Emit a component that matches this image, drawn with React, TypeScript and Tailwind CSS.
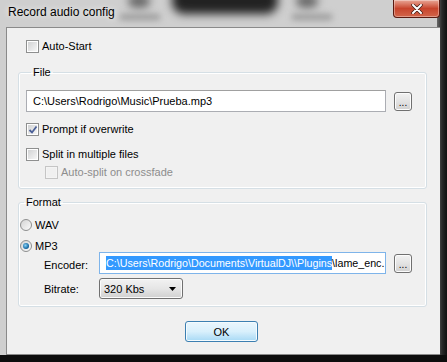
import React from "react"

function CheckBox({ checked = false, disabled = false }: { checked?: boolean; disabled?: boolean }) {
  return (
    <span
      className={`relative flex h-[13px] w-[13px] shrink-0 items-center justify-center border ${
        disabled ? "border-[#c5c5c5] bg-[#f4f4f4]" : "border-[#8e8f8f] bg-white"
      }`}
    >
      <span
        className={`h-[9px] w-[9px] ${
          disabled ? "bg-[#f0f0f0]" : "bg-gradient-to-br from-[#d2d3d4] to-[#f6f6f6]"
        }`}
      />
      {checked && (
        <svg className="absolute left-[1px] top-[1px]" width="10" height="10" viewBox="0 0 10 10">
          <path d="M1.5 5 L4 7.5 L8.5 1.5" fill="none" stroke="#4a5f97" strokeWidth="1.8" />
        </svg>
      )}
    </span>
  )
}

function Radio({ checked = false }: { checked?: boolean }) {
  return (
    <span className="flex h-[12px] w-[12px] shrink-0 items-center justify-center rounded-full border border-[#8e8f8f] bg-gradient-to-br from-[#d4d4d4] to-[#fbfbfb]">
      {checked && (
        <span className="h-[6px] w-[6px] rounded-full bg-[radial-gradient(circle_at_40%_40%,#8ad2f5,#1a6ea8_60%,#0d3a63)]" />
      )}
    </span>
  )
}

function DotsButton() {
  return (
    <div className="flex h-[19px] w-[18px] shrink-0 items-end justify-center rounded-[3px] border border-[#707070] bg-gradient-to-b from-[#f2f2f2] via-[#e3e3e3] to-[#d0d0d0] pb-[2px] text-[10px] leading-[10px] text-black shadow-[inset_0_0_0_1px_#fcfcfc]">
      ...
    </div>
  )
}

function CheckRow({ label, checked, disabled }: { label: string; checked?: boolean; disabled?: boolean }) {
  return (
    <div className="flex h-[13px] items-center gap-[3px]">
      <CheckBox checked={checked} disabled={disabled} />
      <span className={`leading-[13px] ${disabled ? "text-[#8d8d8d]" : "text-black"}`}>{label}</span>
    </div>
  )
}

export default function App() {
  return (
    <div
      className="relative h-[362px] w-[447px] overflow-hidden bg-[#cfcfcf] text-[11px] text-black"
      style={{ fontFamily: '"Liberation Sans", Arial, sans-serif' }}
    >
      {/* glass background blur */}
      <div className="absolute left-[172px] top-[-14px] h-[28px] w-[106px] rounded-[12px] bg-[#222222] blur-[5px]" />
      <div className="absolute left-[128px] top-[-6px] h-[14px] w-[22px] rounded-full bg-[#6a6a6a] blur-[4px]" />
      <div className="absolute left-[296px] top-[-6px] h-[14px] w-[22px] rounded-full bg-[#6a6a6a] blur-[4px]" />
      <div className="absolute left-[120px] top-[14px] h-[6px] w-[40px] bg-[#9a9a9a] blur-[3px]" />
      <div className="absolute left-[292px] top-[14px] h-[6px] w-[40px] bg-[#9a9a9a] blur-[3px]" />
      <div className="absolute right-0 top-0 h-[362px] w-[10px] bg-gradient-to-r from-[#6a6a6a] via-[#2a2a2a] to-[#101010]" />

      <div className="relative flex h-[362px] flex-col">
        {/* title bar */}
        <div className="flex h-[27px] items-start">
          <span className="ml-[8px] mt-[5px] text-[12px] leading-[14px] text-black [text-shadow:0_0_6px_#ffffff]">
            Record audio config
          </span>
          <div className="ml-auto mr-[7px] flex h-[18px] w-[47px] items-center justify-center rounded-b-[4px] border border-t-0 border-[#5a1a10] bg-gradient-to-b from-[#e8a696] via-[#c7442c] to-[#d2654a] shadow-[inset_0_0_0_1px_rgba(255,255,255,0.35)]">
            <svg width="12" height="10" viewBox="0 0 12 10">
              <path d="M2 1 L10 9 M10 1 L2 9" stroke="#3a1a14" strokeWidth="3.4" strokeLinecap="round" />
              <path d="M2 1 L10 9 M10 1 L2 9" stroke="#ffffff" strokeWidth="2" strokeLinecap="round" />
            </svg>
          </div>
        </div>

        <div className="flex">
          <div className="w-[7px] border-r border-[#8a8a8a]" />
          {/* client area */}
          <div className="flex h-[328px] w-[433px] flex-col border-y border-[#8a8a8a] bg-[#f0f0f0]">
            <div className="ml-[19px] mt-[12px]">
              <CheckRow label="Auto-Start" />
            </div>

            <fieldset className="ml-[11px] mt-[12px] w-[409px] rounded-[3px] border border-[#d5dfe5] pb-[9px] pl-[7px] pr-[13px] shadow-[inset_0_0_0_1px_#ffffff]">
              <legend className="ml-[5px] px-[2px] leading-[14px]">File</legend>
              <div className="mt-[11px] flex items-center gap-[8px]">
                <div className="flex h-[22px] w-[360px] items-center border border-[#abadb3] border-t-[#a0a0a0] bg-white pl-[6px] leading-[14px]">
                  C:\Users\Rodrigo\Music\Prueba.mp3
                </div>
                <DotsButton />
              </div>
              <div className="mt-[11px]">
                <CheckRow label="Prompt if overwrite" checked />
              </div>
              <div className="mt-[12px]">
                <CheckRow label="Split in multiple files" />
              </div>
              <div className="ml-[19px] mt-[5px]">
                <CheckRow label="Auto-split on crossfade" disabled />
              </div>
            </fieldset>

            <fieldset className="ml-[11px] mt-[6px] w-[409px] rounded-[3px] border border-[#d5dfe5] pb-[7px] pr-[13px] shadow-[inset_0_0_0_1px_#ffffff]">
              <legend className="ml-[5px] px-[2px] leading-[14px]">Format</legend>
              <div className="ml-[1px] mt-[10px] flex h-[12px] items-center gap-[3px]">
                <Radio />
                <span className="leading-[12px]">WAV</span>
              </div>
              <div className="ml-[1px] mt-[9px] flex h-[12px] items-center gap-[3px]">
                <Radio checked />
                <span className="leading-[12px]">MP3</span>
              </div>
              <div className="flex items-center">
                <span className="ml-[25px] w-[55px] pt-[4px] leading-[14px]">Encoder:</span>
                <div className="flex h-[22px] w-[287px] items-center overflow-hidden whitespace-nowrap border border-[#7eb4ea] bg-white pl-[6px] text-[10.7px] leading-[14px]">
                  <span className="bg-[#3399ff] text-white">C:\Users\Rodrigo\Documents\VirtualDJ\\Plugins</span>
                  <span>\lame_enc.</span>
                </div>
                <div className="ml-[8px]">
                  <DotsButton />
                </div>
              </div>
              <div className="mt-[4px] flex items-center">
                <span className="ml-[25px] w-[55px] pt-[1px] leading-[14px]">Bitrate:</span>
                <div className="flex h-[21px] w-[84px] items-center justify-between rounded-[3px] border border-[#707070] bg-gradient-to-b from-[#f2f2f2] via-[#e6e6e6] to-[#d0d0d0] pl-[4px] pr-[6px] leading-[14px] shadow-[inset_0_0_0_1px_#fbfbfb]">
                  <span>320 Kbs</span>
                  <svg width="7" height="4" viewBox="0 0 7 4">
                    <path d="M0 0 H7 L3.5 4 Z" fill="#000000" />
                  </svg>
                </div>
              </div>
            </fieldset>

            <div className="mt-[14px] flex justify-center">
              <div className="mr-[4px] flex h-[21px] w-[73px] items-center justify-center rounded-[3px] border border-[#3c7fb1] bg-gradient-to-b from-[#eaf6fd] via-[#d9f0fc] to-[#a7d9f5] leading-[14px] shadow-[inset_0_0_0_1px_#f4fbfe]">
                OK
              </div>
            </div>
          </div>
          <div className="w-[7px]" />
        </div>
        <div className="h-[7px] bg-[#0d0d0d]" />
      </div>
    </div>
  )
}
